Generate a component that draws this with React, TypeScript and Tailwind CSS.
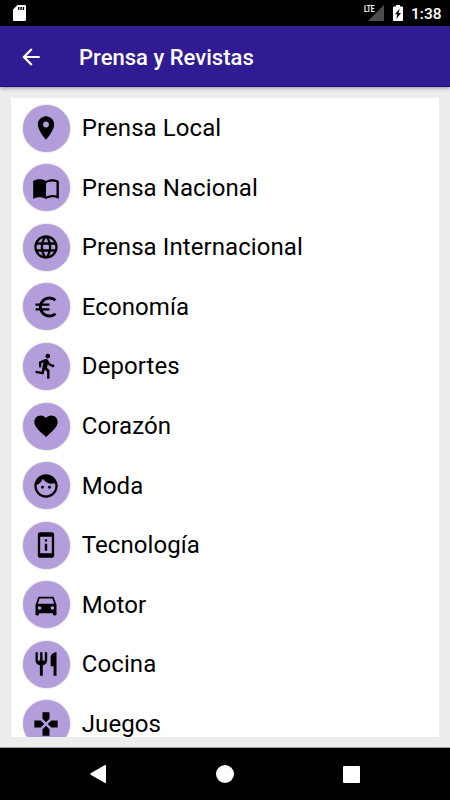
import type { IconType } from 'react-icons';
import {
  MdArrowBack,
  MdDirectionsCar,
  MdDirectionsRun,
  MdEuroSymbol,
  MdFace,
  MdFavorite,
  MdGames,
  MdImportContacts,
  MdLanguage,
  MdPermDeviceInformation,
  MdPlace,
  MdRestaurant,
} from 'react-icons/md';

const categories: { label: string; icon: IconType }[] = [
  { label: 'Prensa Local', icon: MdPlace },
  { label: 'Prensa Nacional', icon: MdImportContacts },
  { label: 'Prensa Internacional', icon: MdLanguage },
  { label: 'Economía', icon: MdEuroSymbol },
  { label: 'Deportes', icon: MdDirectionsRun },
  { label: 'Corazón', icon: MdFavorite },
  { label: 'Moda', icon: MdFace },
  { label: 'Tecnología', icon: MdPermDeviceInformation },
  { label: 'Motor', icon: MdDirectionsCar },
  { label: 'Cocina', icon: MdRestaurant },
  { label: 'Juegos', icon: MdGames },
];

const StatusBar = () => (
  <div className="flex h-[26px] shrink-0 items-start bg-black pr-[9px] pl-[13px] text-white">
    <svg className="mt-[5px] h-4 w-[13px]" viewBox="0 0 13 16">
      <path
        fill="#fff"
        fillRule="evenodd"
        d="M4.6 0H12q1 0 1 1v14q0 1-1 1H1q-1 0-1-1V4.6zM5 2v3h1.4V2zm2.4 0v3h1.4V2zm2.3 0v3h1.4V2z"
      />
    </svg>
    <div className="flex-1" />
    <span className="mt-[4px] w-[11px] origin-left scale-x-[0.72] text-[9px] leading-[10px] font-bold">
      LTE
    </span>
    <svg className="mt-[5px] -ml-[7px] h-4 w-4" viewBox="0 0 16 16">
      <path fill="#4d4d4d" d="M16 0v16H0z" />
    </svg>
    <svg className="mt-[5px] ml-[9px] h-4 w-[10px]" viewBox="0 0 10 16">
      <path
        fill="#fff"
        fillRule="evenodd"
        d="M3 0h4v1.5h2q1 0 1 1V15q0 1-1 1H1q-1 0-1-1V2.500q0-1 1-1h2zM6.800 3.500 2 9.300h2.300L3.300 14 8 8H5.500z"
      />
    </svg>
    <span className="mt-[4px] ml-[8px] w-[30px] text-right text-[15.5px] leading-[20px] font-medium whitespace-nowrap">
      1:38
    </span>
  </div>
);

const App = () => (
  <div className="flex h-[800px] w-[450px] flex-col overflow-hidden bg-[#ededed] font-[Roboto,sans-serif] text-black">
    <StatusBar />

    <header className="z-10 flex h-[61px] shrink-0 items-center border-b border-[#1d0c86] bg-[#311b92] pl-[18px] text-white shadow-[0_1px_4px_rgba(0,0,0,0.4)]">
      <MdArrowBack className="mt-px size-[26px]" />
      <h1 className="ml-[35px] pt-[4px] text-[22px] leading-[26px] font-medium tracking-[0.02px]">
        Prensa y Revistas
      </h1>
    </header>

    {/* Category list */}
    <main className="mx-[11px] mt-[11px] h-[639px] shrink-0 overflow-hidden bg-white">
      <ul className="pt-[0.25px]">
        {categories.map(({ label, icon: Icon }) => (
          <li key={label} className="flex h-[59.6px] items-center pl-[11.8px]">
            <span className="flex size-[47px] items-center justify-center rounded-full bg-[#b39ddb] pr-px shadow-[0_0_2px_rgba(0,0,0,0.3)]">
              <Icon className="size-[28px]" />
            </span>
            <span className="ml-[12px] text-[24px] leading-[28px] tracking-[0.08px]">{label}</span>
          </li>
        ))}
      </ul>
    </main>

    {/* System navigation */}
    <nav className="mt-auto flex h-[53px] shrink-0 items-center justify-center border-t border-[#9ba59f] bg-black">
      <svg className="h-[18px] w-[16px]" viewBox="0 0 16 18">
        <path fill="#fff" d="M15 0q1-.3 1 1v16q0 1.300-1 1L.7 9.700q-1-.7 0-1.400z" />
      </svg>
      <span className="ml-[110px] size-[18px] rounded-full bg-white" />
      <span className="ml-[109px] size-[17px] rounded-[1px] bg-white" />
    </nav>
  </div>
);

export default App;
